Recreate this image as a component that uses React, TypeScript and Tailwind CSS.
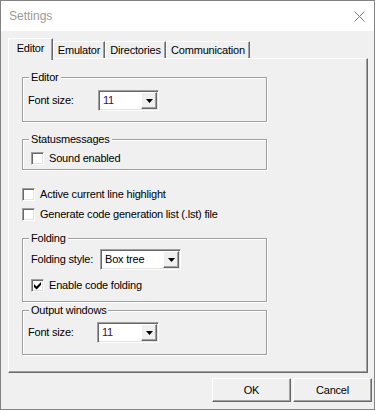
import type { ReactNode } from "react";

function CheckBox({ checked }: { checked?: boolean }) {
  return (
    <span className="flex h-[13px] w-[13px] shrink-0 border border-t-[#a0a0a0] border-l-[#a0a0a0] border-r-white border-b-white bg-white shadow-[inset_1px_1px_0_#696969,inset_-1px_-1px_0_#e3e3e3]">
      {checked && (
        <svg width="11" height="11" viewBox="0 0 11 11">
          <path d="M2 4 L4.5 6.5 L9 2 L9 5 L4.5 9.5 L2 7 Z" fill="#000" />
        </svg>
      )}
    </span>
  );
}

function CheckRow({ label, checked, className }: { label: string; checked?: boolean; className?: string }) {
  return (
    <div className={`flex h-[13px] items-center gap-[5px] ${className ?? ""}`}>
      <CheckBox checked={checked} />
      <span className="leading-[13px]">{label}</span>
    </div>
  );
}

function ComboBox({ value, className, textClass }: { value: string; className: string; textClass?: string }) {
  return (
    <div className={`flex h-[21px] border border-t-[#a0a0a0] border-l-[#a0a0a0] border-r-white border-b-white bg-white shadow-[inset_1px_1px_0_#696969,inset_-1px_-1px_0_#e3e3e3] ${className}`}>
      <span className={`flex flex-1 items-center pl-[4px] ${textClass ?? ""}`}>{value}</span>
      <span className="m-[1px] flex w-[16px] items-center justify-center border border-t-white border-l-white border-r-[#696969] border-b-[#696969] bg-[#f0f0f0] shadow-[inset_-1px_-1px_0_#a0a0a0]">
        <svg width="7" height="4" viewBox="0 0 7 4">
          <path d="M0 0H7L3.5 4Z" fill="#000" />
        </svg>
      </span>
    </div>
  );
}

function GroupBox({ title, className, children }: { title: string; className: string; children: ReactNode }) {
  return (
    <div className={`flex w-[245px] flex-col border border-[#a0a0a0] shadow-[1px_1px_0_#fff,inset_1px_1px_0_#fff] ${className}`}>
      <span className="-mt-[7px] ml-[6px] self-start bg-[#f0f0f0] px-[2px] leading-[13px]">{title}</span>
      {children}
    </div>
  );
}

function Tab({ label, className, active }: { label: string; className: string; active?: boolean }) {
  if (active) {
    return (
      <div className={`relative z-10 -mb-[2px] flex h-[22px] justify-center border-t border-l border-r border-t-white border-l-white border-r-[#696969] bg-[#f0f0f0] pt-[3px] shadow-[inset_-1px_0_0_#a0a0a0] ${className}`}>
        <span className="leading-[13px]">{label}</span>
      </div>
    );
  }
  return (
    <div className={`flex h-[17px] justify-center border-t border-l border-r border-t-white border-l-white border-r-[#696969] pt-[2px] shadow-[inset_-1px_0_0_#a0a0a0] ${className}`}>
      <span className="leading-[13px]">{label}</span>
    </div>
  );
}

function Button({ label }: { label: string }) {
  return (
    <button className="flex h-[24px] w-[79px] items-center justify-center border border-t-white border-l-white border-r-[#696969] border-b-[#696969] bg-[#f0f0f0] shadow-[inset_-1px_-1px_0_#a0a0a0]">
      {label}
    </button>
  );
}

export default function App() {
  return (
    <div className="flex h-[410px] w-[375px] flex-col border border-[#838383] bg-[#f0f0f0] font-['Liberation_Sans',Arial,sans-serif] text-[11px] leading-[13px] tracking-[-0.2px] text-black">
      <div className="flex h-[30px] shrink-0 items-center justify-between bg-white pl-[8px] pr-[9px]">
        <span className="text-[12px] tracking-normal text-[#999999]">Settings</span>
        <svg width="11" height="11" viewBox="0 0 11 11" className="mt-[1px]">
          <path d="M0.5 0.5L10.5 10.5M10.5 0.5L0.5 10.5" stroke="#7a7a7a" strokeWidth="1" />
        </svg>
      </div>

      <div className="ml-[7px] mt-[7px] flex h-[20px] items-end">
        <Tab label="Editor" className="w-[45px]" active />
        <Tab label="Emulator" className="w-[52px]" />
        <Tab label="Directories" className="w-[61px]" />
        <Tab label="Communication" className="w-[84px]" />
      </div>

      <div className="ml-[7px] flex h-[315px] w-[360px] flex-col border border-t-white border-l-white border-r-[#696969] border-b-[#696969] pl-[13px] shadow-[inset_-1px_-1px_0_#a0a0a0]">
        <GroupBox title="Editor" className="mt-[18px] h-[45px]">
          <div className="mt-[6px] flex items-center pl-[5px]">
            <span className="w-[70px]">Font size:</span>
            <ComboBox value="11" className="w-[61px]" textClass="text-[#3a1050]" />
          </div>
        </GroupBox>

        <GroupBox title="Statusmessages" className="mt-[17px] h-[31px]">
          <CheckRow label="Sound enabled" className="mt-[6px] pl-[8px]" />
        </GroupBox>

        <CheckRow label="Active current line highlight" className="mt-[18px]" />
        <CheckRow label="Generate code generation list (.lst) file" className="mt-[7px]" />

        <GroupBox title="Folding" className="mt-[17px] h-[64px]">
          <div className="mt-[4px] flex items-center pl-[8px]">
            <span className="w-[69px]">Folding style:</span>
            <ComboBox value="Box tree" className="w-[81px]" />
          </div>
          <CheckRow label="Enable code folding" checked className="mt-[9px] pl-[8px]" />
        </GroupBox>

        <GroupBox title="Output windows" className="mt-[8px] h-[45px]">
          <div className="mt-[5px] flex items-center pl-[5px]">
            <span className="w-[69px]">Font size:</span>
            <ComboBox value="11" className="w-[62px]" textClass="text-[#3a1050]" />
          </div>
        </GroupBox>
      </div>

      <div className="mt-[5px] flex justify-end gap-[2px] pr-[2px]">
        <Button label="OK" />
        <Button label="Cancel" />
      </div>
    </div>
  );
}
